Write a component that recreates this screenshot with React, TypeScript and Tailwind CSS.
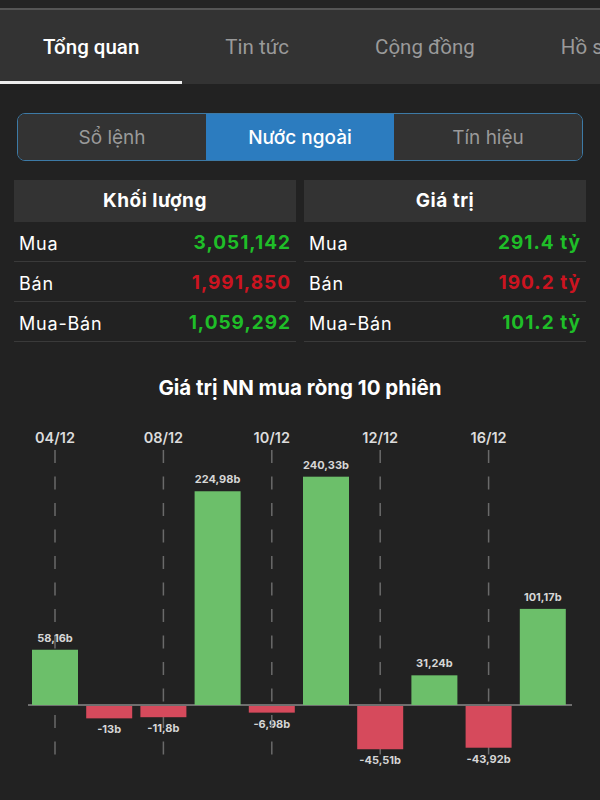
import React from "react";

const tabs = ["Tổng quan", "Tin tức", "Cộng đồng", "Hồ sơ"];
const segments = ["Sổ lệnh", "Nước ngoài", "Tín hiệu"];

type Row = { label: string; value: string; up: boolean };

const volumeRows: Row[] = [
  { label: "Mua", value: "3,051,142", up: true },
  { label: "Bán", value: "1,991,850", up: false },
  { label: "Mua-Bán", value: "1,059,292", up: true },
];

const valueRows: Row[] = [
  { label: "Mua", value: "291.4 tỷ", up: true },
  { label: "Bán", value: "190.2 tỷ", up: false },
  { label: "Mua-Bán", value: "101.2 tỷ", up: true },
];

// giá trị mua ròng 10 phiên (tỷ)
const bars = [
  { v: 58.16, t: "58,16b" },
  { v: -13, t: "-13b" },
  { v: -11.8, t: "-11,8b" },
  { v: 224.98, t: "224,98b" },
  { v: -6.98, t: "-6,98b" },
  { v: 240.33, t: "240,33b" },
  { v: -45.51, t: "-45,51b" },
  { v: 31.24, t: "31,24b" },
  { v: -43.92, t: "-43,92b" },
  { v: 101.17, t: "101,17b" },
];

const dates = [
  { i: 0, t: "04/12" },
  { i: 2, t: "08/12" },
  { i: 4, t: "10/12" },
  { i: 6, t: "12/12" },
  { i: 8, t: "16/12" },
];

function StatTable({ title, rows }: { title: string; rows: Row[] }) {
  return (
    <div className="flex flex-col">
      <div className="h-[42px] bg-[#333333] flex items-center justify-center text-[19px] font-bold text-white tracking-[0.5px]">
        {title}
      </div>
      {rows.map((r) => (
        <div
          key={r.label}
          className="h-10 pt-1 flex items-center justify-between border-b border-[#3a3a3a] px-[5px] tracking-[0.8px]"
        >
          <span className="text-[18px] text-white">{r.label}</span>
          <span
            className={
              "text-[19px] font-bold tracking-[1px] " +
              (r.up ? "text-[#1fbe28]" : "text-[#cc1420]")
            }
          >
            {r.value}
          </span>
        </div>
      ))}
    </div>
  );
}

function NetChart() {
  const base = 303;
  const scale = 0.95;
  const x0 = 32;
  const step = 54.2;
  const w = 46;

  return (
    <svg width="600" height="400" className="block">
      {dates.map((d) => {
        const cx = x0 + d.i * step + w / 2;
        return (
          <text
            key={d.t}
            x={cx}
            y={41}
            textAnchor="middle"
            fill="#dcdcdc"
            fontSize="14.5"
            fontWeight="600"
            fontFamily="Inter, sans-serif"
          >
            {d.t}
          </text>
        );
      })}

      {bars.map((b, i) => {
        const cx = x0 + i * step + w / 2;
        const h = Math.abs(b.v) * scale;
        const y = b.v >= 0 ? base - h - 8 : base + h + 16;
        return (
          <text
            key={"l" + i}
            x={cx}
            y={y}
            textAnchor="middle"
            fill="#d6d6d6"
            fontSize="11"
            fontWeight="700"
            fontFamily="Inter, sans-serif"
          >
            {b.t}
          </text>
        );
      })}

      {dates.map((d) => {
        const cx = x0 + d.i * step + w / 2;
        return (
          <line
            key={"d" + d.t}
            x1={cx}
            x2={cx}
            y1={48}
            y2={366}
            stroke="#6a6a6a"
            strokeWidth="1.5"
            strokeDasharray="13 13.5"
          />
        );
      })}

      <line x1={28} x2={572} y1={base} y2={base} stroke="#8a8a8a" strokeWidth="1.5" />

      {bars.map((b, i) => {
        const x = x0 + i * step;
        const h = Math.abs(b.v) * scale;
        return (
          <rect
            key={"b" + i}
            x={x}
            y={b.v >= 0 ? base - h : base + 1}
            width={w}
            height={h}
            fill={b.v >= 0 ? "#6cbf6a" : "#d64a5c"}
          />
        );
      })}
    </svg>
  );
}

export default function App() {
  return (
    <div className="w-[600px] h-[800px] overflow-hidden bg-[#222222] font-['Inter',sans-serif]">
      <div className="h-2 bg-[#242424]" />
      <div className="h-[2px] bg-[#555555]" />

      {/* tab atas */}
      <div className="h-[74px] bg-[#333333] flex overflow-hidden font-['Roboto',sans-serif]">
        {tabs.map((t, i) => (
          <div
            key={t}
            className={
              "shrink-0 px-[43px] flex items-center text-[20.5px] border-b-[3px] pt-[3px] " +
              (i === 0
                ? "border-[#eeeeee] text-white font-medium"
                : "border-transparent text-[#9a9a9a]")
            }
          >
            {t}
          </div>
        ))}
      </div>

      {/* segmented control */}
      <div className="mx-[17px] mt-[29px] h-[48px] rounded-[8px] border-[1.5px] border-[#3d7aa6] overflow-hidden grid grid-cols-3">
        {segments.map((s, i) => (
          <div
            key={s}
            className={
              "flex items-center justify-center pt-[3px] text-[19px] " +
              (i === 1
                ? "bg-[#2c7cbf] text-white font-medium"
                : "bg-[#333333] text-[#9a9a9a]")
            }
          >
            {s}
          </div>
        ))}
      </div>

      {/* bảng khối lượng / giá trị */}
      <div className="mt-[19px] px-[14px] grid grid-cols-2 gap-2">
        <StatTable title="Khối lượng" rows={volumeRows} />
        <StatTable title="Giá trị" rows={valueRows} />
      </div>

      <div className="mt-[32px] text-center text-[20.5px] font-bold text-white leading-7">
        Giá trị NN mua ròng 10 phiên
      </div>

      <NetChart />
    </div>
  );
}
